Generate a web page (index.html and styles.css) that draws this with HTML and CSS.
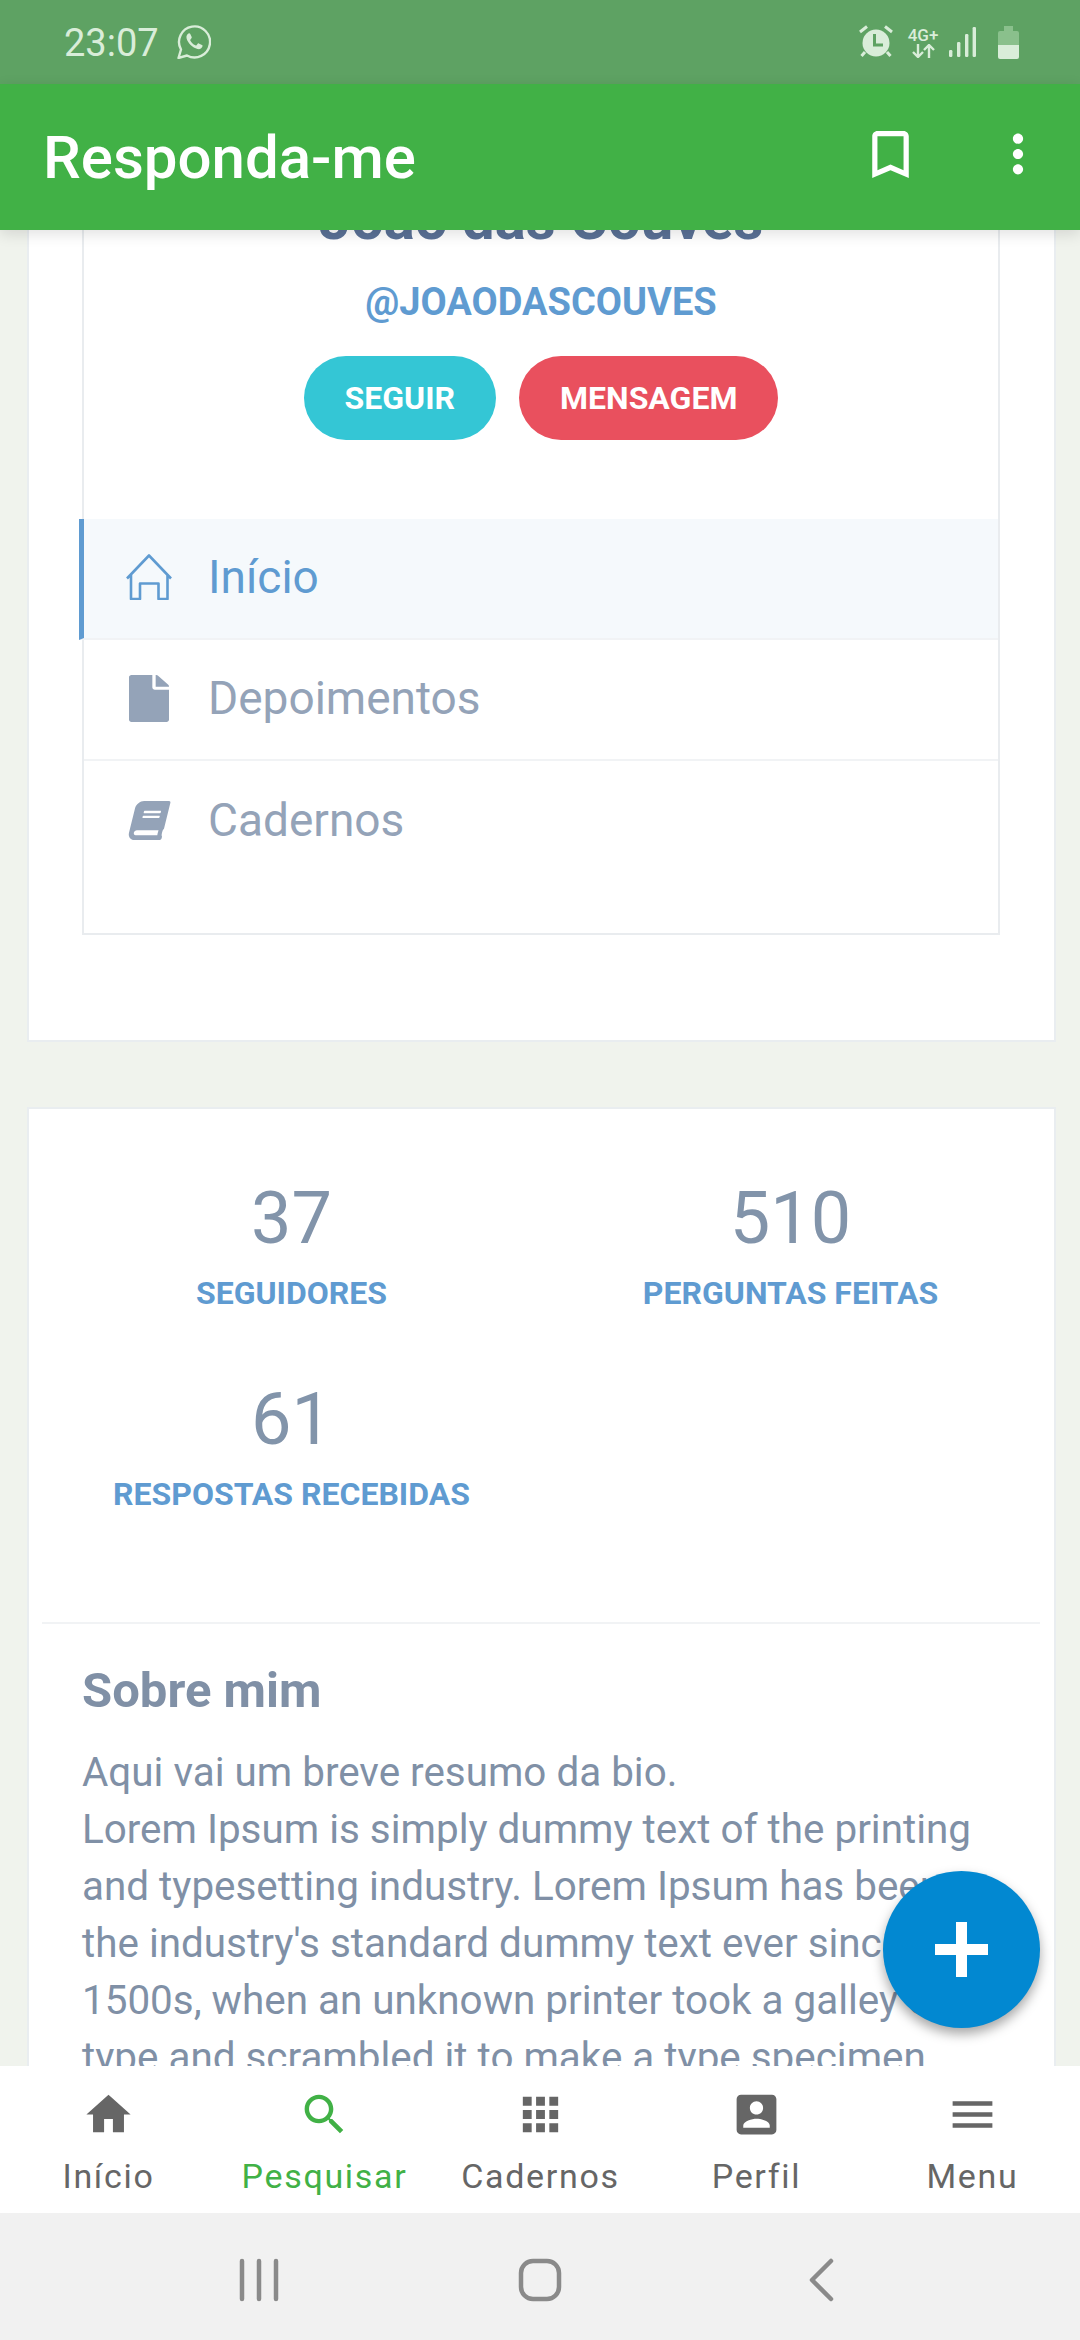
FILE: index.html
```html
<!DOCTYPE html>
<html lang="pt-BR">
<head>
    <meta charset="UTF-8">
    <meta name="viewport" content="width=device-width, initial-scale=1.0">
    <title>Responda-me</title>
    <link rel="stylesheet" href="styles.css">
</head>
<body>
    <div class="phone">
        <div class="status-bar">
            <div class="status-left">
                <span class="status-time">23:07</span>
                <svg class="icon-whatsapp" viewBox="0 0 34 34">
                    <path d="M1.5 33 L4 24.5 A15.5 15.5 0 1 1 10 30.5 Z" fill="none" stroke="currentColor" stroke-width="2.4" stroke-linejoin="round"/>
                    <path d="M11.5 8.5 C10 9.5 9 11 9.6 13.5 C10.8 18 15.5 22.6 20.5 24 C23 24.6 25 23.2 25.6 21 C25.7 20.5 25.5 20.2 25 20 L21.8 18.4 C21.3 18.2 21 18.3 20.7 18.7 L19.5 20.2 C19.2 20.5 18.9 20.6 18.4 20.3 C16 19.2 14.4 17.5 13.3 15.4 C13.1 15 13.2 14.7 13.5 14.4 L14.6 13 C14.8 12.7 14.8 12.4 14.7 12 L13.3 8.9 C13 8.3 12.2 8.1 11.5 8.5 Z" fill="currentColor"/>
                </svg>
            </div>
            <div class="status-right">
                <svg class="icon-alarm" viewBox="0 0 34 34">
                    <path d="M1 7 L8 1.5 M33 7 L26 1.5 M6 27 L2.5 31 M28 27 L31.5 31" stroke="currentColor" stroke-width="3" fill="none"/>
                    <circle cx="17" cy="18" r="13.5" fill="currentColor"/>
                    <path d="M15.5 9 V20 H24" stroke="#5ea263" stroke-width="3" fill="none"/>
                </svg>
                <div class="network">
                    <span class="network-label">4G+</span>
                    <svg class="icon-arrows" viewBox="0 0 24 14">
                        <path d="M7 0 V13 M2 8 L7 13 L12 8 M18 14 V1 M13 6 L18 1 L23 6" stroke="currentColor" stroke-width="2.4" fill="none"/>
                    </svg>
                </div>
                <svg class="icon-signal" viewBox="0 0 27 30">
                    <rect x="0" y="23" width="3.4" height="7" rx="1.2" fill="currentColor"/>
                    <rect x="8" y="15" width="3.4" height="15" rx="1.2" fill="currentColor"/>
                    <rect x="16" y="7" width="3.4" height="23" rx="1.2" fill="currentColor"/>
                    <rect x="23.6" y="0" width="3.4" height="30" rx="1.2" fill="currentColor"/>
                </svg>
                <svg class="icon-battery" viewBox="0 0 21 33">
                    <path d="M6 0 H15 V5 H19 Q21 5 21 7 V19 H0 V7 Q0 5 2 5 H6 Z" fill="#8ac08c"/>
                    <path d="M0 19 H21 V31 Q21 33 19 33 H2 Q0 33 0 31 Z" fill="currentColor"/>
                </svg>
            </div>
        </div>

        <header class="app-bar">
            <span class="app-title">Responda-me</span>
            <svg class="icon-bookmark" viewBox="5 3 14 18">
                <path d="M17 3H7c-1.1 0-1.99.9-1.99 2L5 21l7-3 7 3V5c0-1.1-.9-2-2-2zm0 15l-5-2.18L7 18V5h10v13z" fill="currentColor"/>
            </svg>
            <svg class="icon-more" viewBox="9 3 6 18">
                <path d="M12 8c1.1 0 2-.9 2-2s-.9-2-2-2-2 .9-2 2 .9 2 2 2zm0 2c-1.1 0-2 .9-2 2s.9 2 2 2 2-.9 2-2-.9-2-2-2zm0 6c-1.1 0-2 .9-2 2s.9 2 2 2 2-.9 2-2-.9-2-2-2z" fill="currentColor"/>
            </svg>
        </header>

        <main class="content">
            <div class="content-scroll">
                <section class="card card-profile">
                    <div class="profile-box">
                        <h2 class="profile-name">João das Couves</h2>
                        <div class="profile-handle">@JOAODASCOUVES</div>
                        <div class="profile-actions">
                            <button class="btn btn-follow">SEGUIR</button>
                            <button class="btn btn-message">MENSAGEM</button>
                        </div>
                        <ul class="profile-menu">
                            <li class="menu-item active">
                                <svg class="menu-icon" viewBox="0 0 46 46">
                                    <path d="M1 24.5 L23 1.5 L45 24.5 M5 20 V45 H14 V29.5 H32.5 V45 H41.5 V20" fill="none" stroke="currentColor" stroke-width="2.6" stroke-linejoin="round"/>
                                </svg>
                                Início
                            </li>
                            <li class="menu-item">
                                <svg class="menu-icon icon-file" viewBox="0 0 384 512" preserveAspectRatio="none">
                                    <path d="M224 136V0H24C10.7 0 0 10.7 0 24v464c0 13.3 10.7 24 24 24h336c13.3 0 24-10.7 24-24V160H248c-13.2 0-24-10.8-24-24zm160-14.1v6.1H256V0h6.1c6.4 0 12.5 2.5 17 7l97.9 98c4.5 4.5 7 10.6 7 16.9z" fill="currentColor"/>
                                </svg>
                                Depoimentos
                            </li>
                            <li class="menu-item">
                                <svg class="menu-icon icon-book" viewBox="-10 0 580 512" preserveAspectRatio="none">
                                    <path transform="skewX(-14) translate(120 0)" d="M448 360V24c0-13.3-10.7-24-24-24H96C43 0 0 43 0 96v320c0 53 43 96 96 96h328c13.3 0 24-10.7 24-24v-16c0-7.5-3.5-14.3-8.9-18.7-4.2-15.4-4.2-59.3 0-74.7 5.4-4.3 8.9-11.1 8.9-18.6zM128 134c0-3.3 2.7-6 6-6h212c3.3 0 6 2.7 6 6v20c0 3.3-2.7 6-6 6H134c-3.3 0-6-2.7-6-6v-20zm0 64c0-3.3 2.7-6 6-6h212c3.3 0 6 2.7 6 6v20c0 3.3-2.7 6-6 6H134c-3.3 0-6-2.7-6-6v-20zm253.4 250H96c-17.7 0-32-14.3-32-32 0-17.6 14.4-32 32-32h285.4c-1.9 17.1-1.9 46.9 0 64z" fill="currentColor"/>
                                </svg>
                                Cadernos
                            </li>
                        </ul>
                    </div>
                </section>

                <section class="card card-stats">
                    <div class="stats-grid">
                        <div class="stat">
                            <div class="stat-number">37</div>
                            <div class="stat-label">SEGUIDORES</div>
                        </div>
                        <div class="stat">
                            <div class="stat-number">510</div>
                            <div class="stat-label">PERGUNTAS FEITAS</div>
                        </div>
                        <div class="stat">
                            <div class="stat-number">61</div>
                            <div class="stat-label">RESPOSTAS RECEBIDAS</div>
                        </div>
                    </div>
                    <div class="about">
                        <h3 class="about-title">Sobre mim</h3>
                        <p class="about-text">Aqui vai um breve resumo da bio.<br>Lorem Ipsum is simply dummy text of the printing and typesetting industry. Lorem Ipsum has been the industry's standard dummy text ever since the 1500s, when an unknown printer took a galley of type and scrambled it to make a type specimen book.</p>
                    </div>
                </section>
            </div>
            <button class="fab" aria-label="Nova pergunta"></button>
        </main>

        <nav class="bottom-nav">
            <a class="nav-item">
                <svg class="nav-icon" viewBox="0 0 24 24"><path d="M10 20v-6h4v6h5v-8h3L12 3 2 12h3v8z" fill="currentColor"/></svg>
                <span>Início</span>
            </a>
            <a class="nav-item selected">
                <svg class="nav-icon" viewBox="0 0 24 24"><path d="M15.5 14h-.79l-.28-.27C15.41 12.59 16 11.11 16 9.5 16 5.91 13.09 3 9.5 3S3 5.91 3 9.5 5.91 16 9.5 16c1.61 0 3.09-.59 4.23-1.57l.27.28v.79l5 4.99L20.49 19l-4.99-5zm-6 0C7.01 14 5 11.99 5 9.5S7.01 5 9.5 5 14 7.01 14 9.5 11.99 14 9.5 14z" fill="currentColor"/></svg>
                <span>Pesquisar</span>
            </a>
            <a class="nav-item">
                <svg class="nav-icon" viewBox="0 0 24 24"><path d="M4 8h4V4H4v4zm6 12h4v-4h-4v4zm-6 0h4v-4H4v4zm0-6h4v-4H4v4zm6 0h4v-4h-4v4zm6-10v4h4V4h-4zm-6 4h4V4h-4v4zm6 6h4v-4h-4v4zm0 6h4v-4h-4v4z" fill="currentColor"/></svg>
                <span>Cadernos</span>
            </a>
            <a class="nav-item">
                <svg class="nav-icon" viewBox="0 0 24 24"><path d="M3 5v14c0 1.1.89 2 2 2h14c1.1 0 2-.9 2-2V5c0-1.1-.9-2-2-2H5c-1.11 0-2 .9-2 2zm12 4c0 1.66-1.34 3-3 3s-3-1.34-3-3 1.34-3 3-3 3 1.34 3 3zm-9 8c0-2 4-3.1 6-3.1s6 1.1 6 3.1v1H6v-1z" fill="currentColor"/></svg>
                <span>Perfil</span>
            </a>
            <a class="nav-item">
                <svg class="nav-icon" viewBox="0 0 24 24"><path d="M3 18h18v-2H3v2zm0-5h18v-2H3v2zm0-7v2h18V6H3z" fill="currentColor"/></svg>
                <span>Menu</span>
            </a>
        </nav>

        <div class="system-nav">
            <svg class="system-icon" viewBox="0 0 44 44">
                <path d="M5 3 V41 M22 3 V41 M39 3 V41" stroke="currentColor" stroke-width="4.5" stroke-linecap="round" fill="none"/>
            </svg>
            <svg class="system-icon" viewBox="0 0 44 44">
                <rect x="3" y="3" width="38" height="38" rx="12" stroke="currentColor" stroke-width="4.5" fill="none"/>
            </svg>
            <svg class="system-icon" viewBox="0 0 44 44">
                <path d="M32 3 L13 22 L32 41" stroke="currentColor" stroke-width="4.5" stroke-linecap="round" stroke-linejoin="round" fill="none"/>
            </svg>
        </div>
    </div>
</body>
</html>
```

FILE: styles.css
```css
* {
    box-sizing: border-box;
}

body {
    margin: 0;
    background-color: #f0f3ed;
    font-family: Roboto, "Noto Sans", sans-serif;
}

.phone {
    display: flex;
    flex-direction: column;
    width: 1080px;
    height: 2340px;
    overflow: hidden;
}

/* Status bar */
.status-bar {
    display: flex;
    justify-content: space-between;
    align-items: center;
    height: 84px;
    padding: 0 61px 0 64px;
    background-color: #5ea263;
    color: #d9edd9;
}

.status-left,
.status-right {
    display: flex;
    align-items: center;
}

.status-time {
    font-size: 38px;
    margin-right: 18px;
    padding-top: 2px;
}

.icon-whatsapp {
    width: 34px;
    height: 34px;
}

.icon-alarm {
    width: 34px;
    height: 34px;
    margin-right: 14px;
}

.network {
    display: flex;
    flex-direction: column;
    align-items: center;
    width: 32px;
    margin-right: 10px;
}

.network-label {
    font-size: 17px;
    font-weight: 500;
    line-height: 17px;
}

.icon-arrows {
    width: 24px;
    height: 14px;
}

.icon-signal {
    width: 27px;
    height: 30px;
    margin-right: 22px;
}

.icon-battery {
    width: 21px;
    height: 33px;
}

/* App bar */
.app-bar {
    position: relative;
    z-index: 2;
    display: flex;
    align-items: center;
    height: 146px;
    padding: 0 54px 0 43px;
    background-color: #41b146;
    color: #ffffff;
    box-shadow: 0 4px 14px rgba(0, 0, 0, 0.12);
}

.app-title {
    flex: 1;
    font-size: 60px;
    font-weight: 500;
}

.icon-bookmark {
    width: 37px;
    height: 47px;
    margin-top: -6px;
    margin-right: 101px;
}

.icon-more {
    width: 16px;
    height: 46px;
    margin-top: -6px;
}

/* Scrolled content */
.content {
    position: relative;
    flex: 1;
    overflow: hidden;
}

.content-scroll {
    margin-top: -36px;
}

.card {
    margin: 0 24px 65px 27px;
    background-color: #ffffff;
    border: 2px solid #e9edf0;
}

.card-profile {
    padding: 0 54px 105px 53px;
}

.profile-box {
    border: 2px solid #e9ecef;
    border-top: none;
    padding-bottom: 51px;
}

.profile-name {
    margin: 0;
    font-size: 58px;
    font-weight: 700;
    line-height: 47px;
    text-align: center;
    color: #5a7196;
}

.profile-handle {
    margin-top: 37px;
    font-size: 38px;
    font-weight: 700;
    line-height: 44px;
    text-align: center;
    color: #5f9bd1;
}

.profile-actions {
    display: flex;
    justify-content: center;
    gap: 23px;
    margin-top: 32px;
}

.btn {
    height: 84px;
    padding: 0 41px;
    border: none;
    border-radius: 42px;
    color: #ffffff;
    font-family: inherit;
    font-size: 32px;
    font-weight: 700;
}

.btn-follow {
    background-color: #34c6d5;
}

.btn-message {
    background-color: #e9505e;
}

.profile-menu {
    list-style: none;
    margin: 79px 0 0;
    padding: 0;
}

.menu-item {
    display: flex;
    align-items: center;
    height: 121px;
    padding: 0 0 3px 42px;
    border-bottom: 2px solid #f1f3f5;
    font-size: 46px;
    color: #94a3b8;
}

.menu-item:last-child {
    border-bottom: none;
}

.menu-item.active {
    margin-left: -5px;
    border-left: 5px solid #5f9bd1;
    background-color: #f5f9fc;
    color: #5f9bd1;
}

.menu-icon {
    width: 46px;
    height: 46px;
    margin-right: 36px;
}

.icon-file {
    width: 40px;
    height: 47px;
    margin: 0 39px 0 3px;
}

.icon-book {
    width: 44px;
    height: 39px;
    margin: 0 37px 0 1px;
}

/* Stats and bio */
.card-stats {
    padding: 0 14px 0 13px;
}

.stats-grid {
    display: grid;
    grid-template-columns: 1fr 1fr;
    padding: 68px 0 43px;
    border-bottom: 2px solid #f1f3f5;
}

.stat {
    height: 201px;
    text-align: center;
}

.stat-number {
    font-size: 72px;
    line-height: 84px;
    color: #8294aa;
}

.stat-label {
    margin-top: 12px;
    font-size: 32px;
    font-weight: 700;
    line-height: 40px;
    color: #5f9bd1;
}

.about {
    padding: 0 40px;
}

.about-title {
    margin: 40px 0 26px;
    font-size: 49px;
    font-weight: 700;
    line-height: 54px;
    color: #8090a6;
}

.about-text {
    margin: 0;
    font-size: 40.4px;
    line-height: 57px;
    color: #8090a6;
}

.fab {
    position: absolute;
    top: 1641px;
    left: 883px;
    width: 157px;
    height: 157px;
    border: none;
    border-radius: 50%;
    background-color: #0288d1;
    box-shadow: 0 6px 12px rgba(0, 0, 0, 0.35);
}

.fab::before,
.fab::after {
    content: "";
    position: absolute;
    background-color: #ffffff;
}

.fab::before {
    left: 52px;
    top: 73px;
    width: 53px;
    height: 11px;
}

.fab::after {
    left: 73px;
    top: 51px;
    width: 11px;
    height: 55px;
}

/* Bottom navigation */
.bottom-nav {
    position: relative;
    z-index: 2;
    display: grid;
    grid-template-columns: repeat(5, 216px);
    height: 147px;
    background-color: #ffffff;
}

.nav-item {
    display: flex;
    flex-direction: column;
    align-items: center;
    padding-top: 22px;
    color: #666666;
    font-size: 34px;
    letter-spacing: 1.7px;
}

.nav-item span {
    margin-top: 13px;
    padding-left: 1px;
    line-height: 44px;
}

.nav-item.selected {
    color: #41b146;
}

.nav-icon {
    width: 53px;
    height: 53px;
}

/* System navigation */
.system-nav {
    display: flex;
    justify-content: center;
    align-items: center;
    gap: 237px;
    height: 127px;
    padding-top: 6px;
    background-color: #f1f1f1;
    color: #8a8a8a;
}

.system-icon {
    width: 44px;
    height: 44px;
}
```
